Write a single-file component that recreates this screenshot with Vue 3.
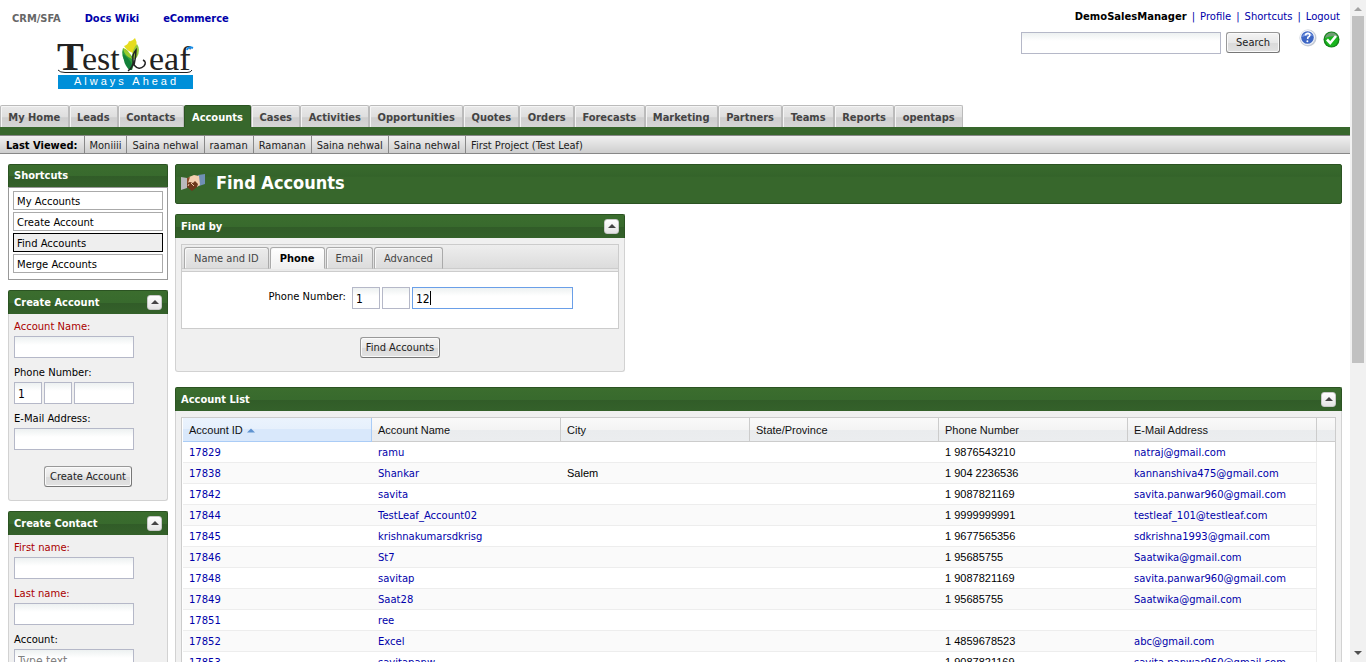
<script setup>
import { onMounted, ref } from 'vue'

const tabs = ['My Home', 'Leads', 'Contacts', 'Accounts', 'Cases', 'Activities', 'Opportunities', 'Quotes', 'Orders', 'Forecasts', 'Marketing', 'Partners', 'Teams', 'Reports', 'opentaps']
const viewed = ['Moniiii', 'Saina nehwal', 'raaman', 'Ramanan', 'Saina nehwal', 'Saina nehwal', 'First Project (Test Leaf)']
const shortcuts = ['My Accounts', 'Create Account', 'Find Accounts', 'Merge Accounts']
const searchTabs = ['Name and ID', 'Phone', 'Email', 'Advanced']
const columns = ['Account ID', 'Account Name', 'City', 'State/Province', 'Phone Number', 'E-Mail Address']
const accounts = [
  { id: '17829', name: 'ramu', city: '', phone: '1 9876543210', email: 'natraj@gmail.com' },
  { id: '17838', name: 'Shankar', city: 'Salem', phone: '1 904 2236536', email: 'kannanshiva475@gmail.com' },
  { id: '17842', name: 'savita', city: '', phone: '1 9087821169', email: 'savita.panwar960@gmail.com' },
  { id: '17844', name: 'TestLeaf_Account02', city: '', phone: '1 9999999991', email: 'testleaf_101@testleaf.com' },
  { id: '17845', name: 'krishnakumarsdkrisg', city: '', phone: '1 9677565356', email: 'sdkrishna1993@gmail.com' },
  { id: '17846', name: 'St7', city: '', phone: '1 95685755', email: 'Saatwika@gmail.com' },
  { id: '17848', name: 'savitap', city: '', phone: '1 9087821169', email: 'savita.panwar960@gmail.com' },
  { id: '17849', name: 'Saat28', city: '', phone: '1 95685755', email: 'Saatwika@gmail.com' },
  { id: '17851', name: 'ree', city: '', phone: '', email: '' },
  { id: '17852', name: 'Excel', city: '', phone: '1 4859678523', email: 'abc@gmail.com' },
  { id: '17853', name: 'savitapanw', city: '', phone: '1 9087821169', email: 'savita.panwar960@gmail.com' }
]
const activeSearchTab = ref('Phone')
const country = ref('1')
const area = ref('')
const number = ref('12')
const newCountry = ref('1')
const numberInput = ref(null)

onMounted(() => {
  numberInput.value.focus({ preventScroll: true })
  numberInput.value.setSelectionRange(2, 2)
})
</script>

<template>
  <div class="window">
    <div class="page">
      <header class="top">
        <div class="brand">
          <nav class="apps" aria-label="Applications">
            <span class="current">CRM/SFA</span>
            <a href="#">Docs Wiki</a>
            <a href="#">eCommerce</a>
          </nav>
          <svg class="logo" viewBox="0 0 137 53" role="img" aria-label="TestLeaf Always Ahead">
            <g class="wordmark">
              <text x="0" y="33" font-size="40" font-weight="bold">T</text>
              <text x="25" y="33" font-size="34">est</text>
              <text x="92" y="33" font-size="34">eaf</text>
            </g>
            <path d="M66 11Q63 20 70 26Q74 29 75 33Q79 24 74 18Z" fill="#2f9e3f" />
            <path d="M66 17Q66 26 72 33H75Q77 25 66 17Z" fill="#12813a" />
            <path d="M67 9Q71 8 72 4Q75 5 78 1Q82 8 76 16Q70 14 67 9Z" fill="#e6dc1c" />
            <path d="M66 11Q72 12 75 22Q67 19 66 11Z" fill="#9bcb2c" />
            <path d="M80 7Q84 13 80 20Q77 24 75 20Q75 13 80 7Z" fill="#93c83a" />
            <path d="M71 34Q77 30 76 22Q75 18 79 13Q79 20 77 28Q82 34 87 29Q90 25 86 23" fill="none" stroke="#222" stroke-width="1.500" />
            <path d="M130 13Q131 9 136 11" fill="none" stroke="#168ce5" stroke-width="2" />
            <path d="M1 33Q3 35.500 8 35.500H130Q134 35.500 135 33" fill="none" stroke="#222" />
            <rect x="1" y="38" width="135" height="14" fill="#008fd9" />
            <text x="17" y="48" class="motto">Always Ahead</text>
          </svg>
        </div>
        <div class="account">
          <div class="user"><b>DemoSalesManager</b><i>|</i><a href="#">Profile</a><i>|</i><a href="#">Shortcuts</a><i>|</i><a href="#">Logout</a></div>
          <form class="search" @submit.prevent>
            <input class="field" type="text" aria-label="Search">
            <button class="button" type="submit">Search</button>
            <span class="status">
              <a href="#" aria-label="Help">
                <svg width="18" height="18" viewBox="0 0 18 18"><circle cx="9" cy="9" r="8.500" fill="#c5cbd6" /><circle cx="8.500" cy="8.500" r="7.500" fill="#f2f5fb" /><circle cx="8.500" cy="8.500" r="6.300" fill="#3d66c4" /><path d="M3 8A6 6 0 0 1 14 7Q9 5 3 8Z" fill="#7c9ce2" /><path d="M6.500 6.500Q6.800 4.300 9 4.400Q11.300 4.700 10.800 6.500Q10.500 7.500 9 8.300L8.600 10" fill="none" stroke="#fff" stroke-width="1.600" /><circle cx="8.400" cy="12.300" r="1" fill="#fff" /></svg>
              </a>
              <a href="#" class="ok" aria-label="Status">
                <svg width="17" height="17" viewBox="0 0 17 17"><circle cx="8.500" cy="8.500" r="8" fill="#16831c" /><circle cx="8.500" cy="9" r="6.500" fill="#18b51d" /><path d="M2 7Q3 2 8.500 1.500Q13 1.500 15 6Q8 4 2 7Z" fill="#6f9c74" /><path d="M4 8.500L7.200 12L13 5" fill="none" stroke="#fff" stroke-width="2.600" /></svg>
              </a>
            </span>
          </form>
        </div>
      </header>

      <nav class="tabs" aria-label="Main">
        <div class="tabrow">
          <a v-for="tab in tabs" :key="tab" href="#" :class="{ active: tab === 'Accounts' }">{{ tab }}</a>
        </div>
      </nav>
      <div class="recent">
        <b>Last Viewed:</b>
        <a v-for="(item, i) in viewed" :key="i" href="#">{{ item }}</a>
      </div>

      <div class="columns">
        <aside class="side">
          <section class="shortcuts">
            <h2 class="bar short">Shortcuts</h2>
            <ul>
              <li v-for="item in shortcuts" :key="item"><a href="#" :class="{ on: item === 'Find Accounts' }">{{ item }}</a></li>
            </ul>
          </section>

          <section class="panel">
            <div class="bar"><h2>Create Account</h2><button class="fold" type="button" aria-label="Collapse Create Account"></button></div>
            <form class="quick" @submit.prevent>
              <label class="required" for="acc-name">Account Name:</label>
              <input id="acc-name" class="field" type="text">
              <label for="acc-phone">Phone Number:</label>
              <div class="phone">
                <input v-model="newCountry" class="field code" type="text" aria-label="Country code">
                <input class="field code" type="text" aria-label="Area code">
                <input id="acc-phone" class="field" type="text">
              </div>
              <label for="acc-mail">E-Mail Address:</label>
              <input id="acc-mail" class="field" type="text">
              <button class="button" type="submit">Create Account</button>
            </form>
          </section>

          <section class="panel">
            <div class="bar"><h2>Create Contact</h2><button class="fold" type="button" aria-label="Collapse Create Contact"></button></div>
            <form class="quick" @submit.prevent>
              <label class="required" for="first">First name:</label>
              <input id="first" class="field" type="text">
              <label class="required" for="last">Last name:</label>
              <input id="last" class="field" type="text">
              <label for="contact-acc">Account:</label>
              <input id="contact-acc" class="field" type="text" placeholder="Type text...">
            </form>
          </section>
        </aside>

        <main class="main">
          <div class="title">
            <svg width="24" height="17" viewBox="0 0 24 17" aria-hidden="true">
              <path d="M0 3L6 4V14L0 16Z" fill="#b9b9bd" />
              <path d="M17 1L24 0V10L18 12Z" fill="#6f8fb5" />
              <path d="M8 3L13 1L18 2L19 11L16 13L12 10L6 9Z" fill="#f3cfb0" />
              <path d="M6 9L9 8L12 9L14 7L17 10L16 13L11 17L6 13Z" fill="#6d371c" />
              <path d="M6 4L9 3L7 9L6 10Z" fill="#8a4a28" />
              <path d="M7 12L8 10M10 9L13 12" stroke="#efc8a6" />
            </svg>
            <h1>Find Accounts</h1>
          </div>

          <section class="panel find">
            <div class="bar"><h2>Find by</h2><button class="fold" type="button" aria-label="Collapse Find by"></button></div>
            <form class="finder" @submit.prevent>
              <div class="tabbox">
                <div class="strip" role="tablist">
                  <button v-for="tab in searchTabs" :key="tab" type="button" role="tab" :aria-selected="tab === activeSearchTab" :class="{ chosen: tab === activeSearchTab }" @click="activeSearchTab = tab">{{ tab }}</button>
                </div>
                <div class="criteria">
                  <label for="find-phone">Phone Number:</label>
                  <input v-model="country" class="field code" type="text" aria-label="Country code">
                  <input v-model="area" class="field code" type="text" aria-label="Area code">
                  <span class="caret"><input id="find-phone" ref="numberInput" v-model="number" class="field focused" type="text"></span>
                </div>
              </div>
              <button class="button" type="submit">Find Accounts</button>
            </form>
          </section>

          <section class="panel list">
            <div class="bar"><h2>Account List</h2><button class="fold" type="button" aria-label="Collapse Account List"></button></div>
            <div class="gridwrap">
              <table>
                <colgroup><col v-for="c in columns" :key="c"><col class="gutter"></colgroup>
                <thead>
                  <tr>
                    <th v-for="(c, i) in columns" :key="c" :class="{ sorted: i === 0 }">{{ c }}<svg v-if="i === 0" width="8" height="5" viewBox="0 0 8 5" aria-hidden="true"><path d="M0 4.500L4 0.500L8 4.500Z" fill="#5f93d0" /></svg></th>
                    <th></th>
                  </tr>
                </thead>
                <tbody>
                  <tr v-for="row in accounts" :key="row.id">
                    <td><a href="#">{{ row.id }}</a></td>
                    <td><a href="#">{{ row.name }}</a></td>
                    <td>{{ row.city }}</td>
                    <td></td>
                    <td>{{ row.phone }}</td>
                    <td><a href="#">{{ row.email }}</a></td>
                    <td></td>
                  </tr>
                </tbody>
              </table>
            </div>
          </section>
        </main>
      </div>
    </div>
    <div class="scroll" aria-hidden="true">
      <svg width="16" height="16" viewBox="0 0 16 16"><path d="M4 11L8 7L12 11Z" fill="#a3a3a3" /></svg>
      <div class="track"><div class="thumb"></div></div>
      <svg width="16" height="16" viewBox="0 0 16 16"><path d="M4 5L8 9L12 5Z" fill="#505050" /></svg>
    </div>
  </div>
</template>

<style>
body { background: #fff; }
</style>

<style scoped>
* { box-sizing: border-box; }
.window {
  --ui: "DejaVu Sans Condensed", "DejaVu Sans", sans-serif;
  display: flex;
  height: 100vh;
  overflow: hidden;
  font: 10px/14px "DejaVu Sans", sans-serif;
  color: #000;
}
.page { flex: 1; min-width: 0; overflow: hidden; }
a { color: #0000aa; text-decoration: none; }
h1, h2, ul { margin: 0; padding: 0; }
.top { display: flex; justify-content: space-between; height: 105px; }
.apps { display: flex; gap: 24px; padding: 12px 0 0 12px; font: bold 11px/14px var(--ui); }
.current { color: #666; }
.logo { display: block; width: 137px; height: 53px; margin: 11px 0 0 57px; }
.wordmark { font-family: "Liberation Serif", serif; fill: #222; }
.motto { font: 11px "Liberation Sans", sans-serif; fill: #fff; letter-spacing: 3px; }
.account { padding: 10px 10px 0 0; }
.user { display: flex; justify-content: flex-end; gap: 5px; line-height: 14px; }
.user i { font-style: normal; color: #0000aa; }
.search { display: flex; justify-content: flex-end; gap: 5px; padding-top: 8px; }
.search .field { width: 200px; }
.status { display: flex; gap: 6px; width: 55px; justify-content: flex-end; margin-top: -3px; }
.status svg { display: block; }
.ok { padding-top: 2px; }

.field {
  width: 120px;
  min-width: 0;
  height: 22px;
  margin: 0;
  padding: 2px 3px 0;
  border: 1px solid #b5b8c8;
  border-radius: 0;
  background: linear-gradient(#edf1f1, #fff 8px);
  font: 12px/16px var(--ui);
  color: #000;
  outline: none;
}
.field::placeholder { color: #808080; opacity: 1; }
.field.code { width: 28px; }
.field.focused { display: block; width: 161px; border-color: #6a9fe8; caret-color: transparent; }
.caret { position: relative; }
.caret::after { content: ""; position: absolute; left: 18px; top: 4px; width: 1px; height: 14px; background: #000; }
.button {
  height: 21px;
  margin: 0;
  padding: 1px 5px 0;
  border: 1px solid #999;
  border-right-color: #777;
  border-bottom-color: #777;
  border-radius: 3px;
  background: linear-gradient(#f4f4f4, #e8e8e8 50%, #dadada 51%, #e2e2e2);
  box-shadow: inset 0 0 0 1px #fafafa;
  font: 11px/14px var(--ui);
  color: #222;
}
.search .button { padding: 1px 9px 0; }

.tabs { border-bottom: 8px solid #37672c; }
.tabrow { display: flex; max-width: 963px; }
.tabs a {
  flex: 1 0 auto;
  height: 22px;
  padding: 0 6px;
  border: 1px solid #bbb;
  border-bottom: 0;
  border-radius: 2px 2px 0 0;
  background: linear-gradient(#e9e9e9, #dedede 54%, #cecece 55%, #d6d6d6);
  box-shadow: inset 1px 1px #f5f5f5;
  font: bold 11px/23px var(--ui);
  text-align: center;
  color: #444;
}
.tabs .active { border-color: #2b5322; background: #37672c; box-shadow: none; color: #fff; }
.recent {
  display: flex;
  height: 19px;
  border-top: 1px solid #888;
  border-bottom: 1px solid #888;
  background: linear-gradient(#f0f0f0, #cecece);
  font: 11px/19px var(--ui);
}
.recent b { padding: 0 6px; }
.recent a { padding: 0 5px; border-left: 1px solid #888; color: #222; }

.columns { display: flex; gap: 7px; padding: 10px 8px; }
.side { flex: none; width: 160px; }
.main { flex: 1; min-width: 0; }
.bar {
  display: flex;
  align-items: center;
  justify-content: space-between;
  height: 24px;
  padding: 0 5px;
  border: 1px solid #2b5322;
  border-bottom: 0;
  border-radius: 2px 2px 0 0;
  background: linear-gradient(#3b6d2e, #386a2d 50%, #315c28 51%, #34612a);
  color: #fff;
}
.bar, .bar h2 { font: bold 11px/22px var(--ui); }
.bar.short { height: 23px; }
.fold {
  position: relative;
  width: 15px;
  height: 15px;
  padding: 0;
  border: 1px solid #c8c8c8;
  border-radius: 3px;
  background: linear-gradient(#fff, #e4e4e4);
}
.fold::after {
  content: "";
  position: absolute;
  left: 3px;
  top: 4px;
  border: solid transparent;
  border-width: 0 4px 4px;
  border-bottom-color: #444;
}
.shortcuts { margin-bottom: 10px; }
.shortcuts ul { display: grid; gap: 2px; padding: 3px 4px 6px; border: 1px solid #999; list-style: none; }
.shortcuts a { display: block; height: 19px; padding: 0 3px; border: 1px solid #aaa; font-size: 10px; line-height: 19px; color: #000; }
.shortcuts .on { border-color: #000; background: #eee; }
.panel { margin-bottom: 10px; }
.quick {
  display: flex;
  flex-direction: column;
  align-items: flex-start;
  padding: 2px 5px 13px;
  border: 1px solid #d2d2d2;
  border-top: 0;
  border-radius: 0 0 3px 3px;
  background: #f0f0f0;
}
.quick label { padding-top: 2px; line-height: 18px; }
.quick .field { margin-bottom: 4px; }
.phone { display: flex; gap: 2px; width: 120px; }
.phone .field { flex: 1; }
.phone .code { flex: none; }
.quick .button { align-self: center; margin-top: 12px; }
.required { color: #aa0000; }

.title {
  display: flex;
  align-items: center;
  gap: 11px;
  height: 40px;
  margin-bottom: 10px;
  padding: 0 5px 3px;
  border: 1px solid #2b5322;
  border-radius: 2px;
  background: linear-gradient(#386a2d, #34632a 30%, #37672c 31%, #37672c);
  color: #fff;
}
.title h1 { font: bold 18px/24px var(--ui); }
.find { width: 450px; margin-bottom: 15px; }
.finder { display: flex; flex-direction: column; align-items: center; padding: 6px 5px 13px; border: 1px solid #d2d2d2; border-top: 0; border-radius: 0 0 3px 3px; background: #f0f0f0; }
.tabbox { width: 100%; margin-bottom: 8px; border: 1px solid #ccc; background: #fff; }
.strip { display: flex; gap: 1px; height: 27px; padding: 2px 2px 0; border-bottom: 1px solid #ccc; background: linear-gradient(#eee, #dcdcdc 23px, #ccc 23px, #ccc 24px, #eaeaea 24px); }
.strip button {
  height: 22px;
  margin: 0;
  padding: 1px 9px 0;
  border: 1px solid #aaa;
  border-bottom-color: #ccc;
  border-radius: 3px 3px 0 0;
  background: linear-gradient(#ececec, #dcdcdc);
  box-shadow: inset 1px 1px #f8f8f8;
  font: 11px/18px var(--ui);
  color: #444;
}
.strip .chosen { border-bottom-color: #f0f0f0; background: linear-gradient(#fff, #f0f0f0); font-weight: bold; color: #000; }
.criteria { display: flex; justify-content: flex-end; gap: 2px; padding: 15px 45px 19px; }
.criteria label { margin-right: 4px; line-height: 20px; white-space: nowrap; }

.gridwrap { padding: 6px 5px; border: 1px solid #d2d2d2; border-top: 0; background: #f0f0f0; }
table { width: 100%; padding-left: 1px; border: 1px solid #ccc; border-collapse: separate; border-spacing: 0; table-layout: fixed; background: #fff; font: 11px/14px "Liberation Sans", sans-serif; }
.gutter { width: 18px; }
th { height: 24px; padding: 0 6px; border-right: 1px solid #ccc; border-bottom: 1px solid #ccc; background: linear-gradient(#fafafa, #f4f4f4 50%, #eaecee 51%, #ebedef); font-weight: normal; text-align: left; color: #111; }
th:last-child { border-right: 0; }
th.sorted { border-color: #aaccf6; background: linear-gradient(#ebf3fd, #e6f0fc 48%, #d9e8fb 50%); }
th svg { margin-left: 4px; vertical-align: 1px; }
td { height: 21px; padding: 0 6px; border-bottom: 1px solid #ededed; }
td:nth-child(6) { border-right: 1px solid #ededed; white-space: nowrap; }
td:last-child { border: 0; background: #fff; }
tbody tr:nth-child(even) { background: #fafafa; }
td a { font: 10px/14px "DejaVu Sans", sans-serif; }

.scroll { display: flex; flex: none; flex-direction: column; width: 16px; background: #f1f1f1; }
.scroll svg { display: block; flex: none; }
.track { flex: 1; padding: 0 2px; }
.thumb { height: 55%; background: #c1c1c1; }
</style>
